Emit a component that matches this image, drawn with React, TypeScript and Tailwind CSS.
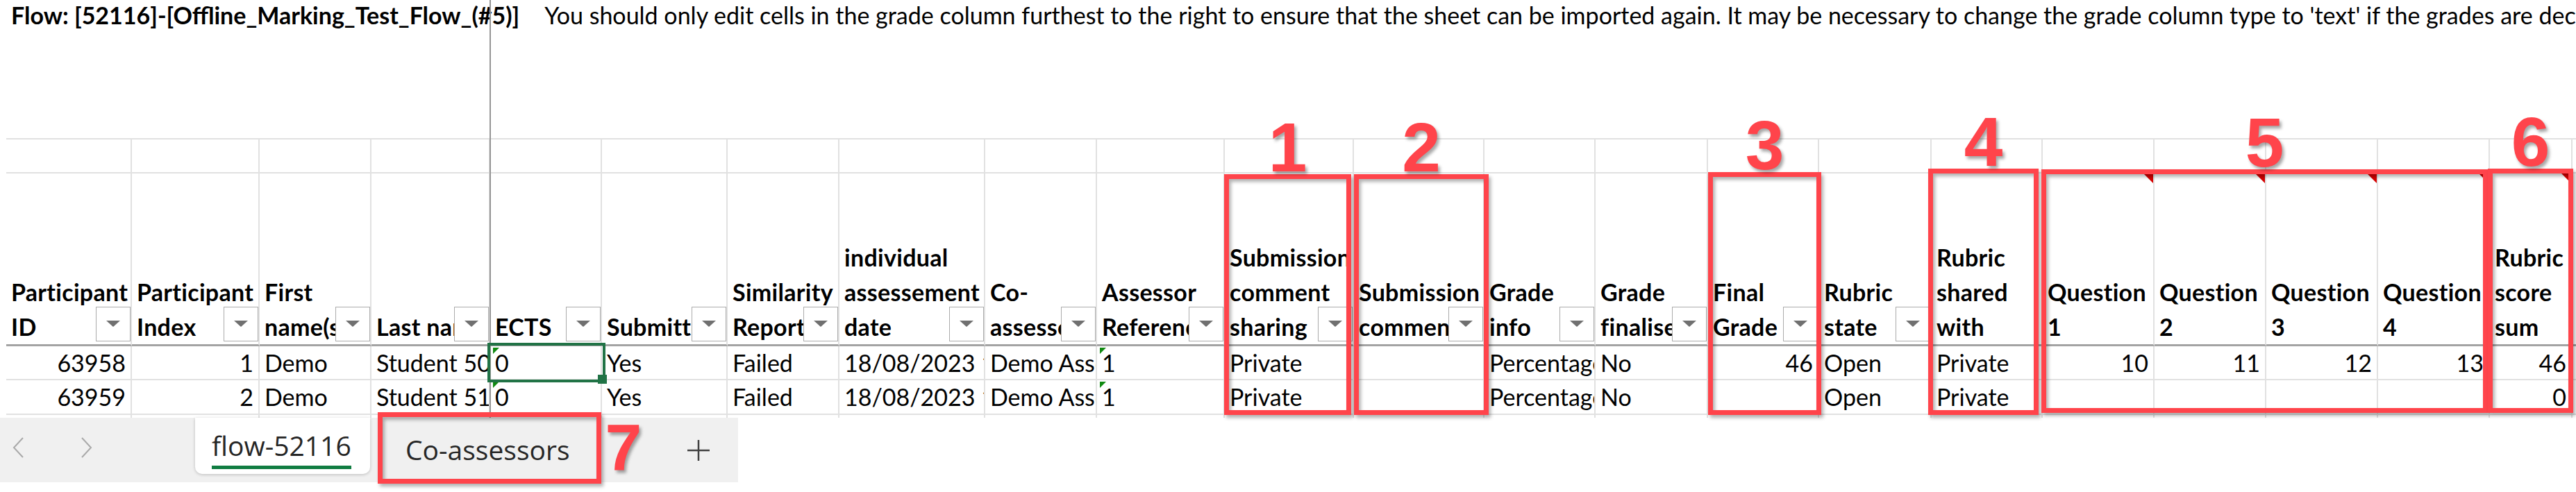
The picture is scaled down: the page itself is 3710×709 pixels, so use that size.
import clsx from "clsx";

type Head = { lines: string[]; filter?: boolean; note?: boolean };

const heads: Head[] = [
  { lines: ["Participant", "ID"], filter: true },
  { lines: ["Participant", "Index"], filter: true },
  { lines: ["First", "name(s)"], filter: true },
  { lines: ["Last name"], filter: true },
  { lines: ["ECTS"], filter: true },
  { lines: ["Submitted"], filter: true },
  { lines: ["Similarity", "Report"], filter: true },
  { lines: ["individual", "assessement", "date"], filter: true },
  { lines: ["Co-", "assessor(s)"], filter: true },
  { lines: ["Assessor", "Reference"], filter: true },
  { lines: ["Submission", "comment", "sharing"], filter: true },
  { lines: ["Submission", "comment"], filter: true },
  { lines: ["Grade", "info"], filter: true },
  { lines: ["Grade", "finalised"], filter: true },
  { lines: ["Final", "Grade"], filter: true },
  { lines: ["Rubric", "state"], filter: true },
  { lines: ["Rubric", "shared", "with"] },
  { lines: ["Question", "1"], note: true },
  { lines: ["Question", "2"], note: true },
  { lines: ["Question", "3"], note: true },
  { lines: ["Question", "4"], note: true },
  { lines: ["Rubric", "score", "sum"], note: true },
  { lines: [] },
];

const rows: string[][] = [
  ["63958", "1", "Demo", "Student 50", "0", "Yes", "Failed", "18/08/2023 10:24", "Demo Assessor", "1", "Private", "", "Percentage", "No", "46", "Open", "Private", "10", "11", "12", "13", "46", ""],
  ["63959", "2", "Demo", "Student 51", "0", "Yes", "Failed", "18/08/2023 10:24", "Demo Assessor", "1", "Private", "", "Percentage", "No", "", "Open", "Private", "", "", "", "", "0", ""],
];

const rightCols = [0, 1, 14, 17, 18, 19, 20, 21];
const textNumCols = [4, 9];

// red callouts drawn over the sheet (box + number above it)
const callouts = [
  { n: "1", box: "top-[251px] left-[1763px] h-[347px] w-[183px]" },
  { n: "2", box: "top-[251px] left-[1950px] h-[347px] w-[194px]" },
  { n: "3", box: "top-[248px] left-[2460px] h-[350px] w-[163px]" },
  { n: "4", box: "top-[243px] left-[2777px] h-[355px] w-[159px]" },
  { n: "5", box: "top-[244px] left-[2940px] h-[351px] w-[643px]" },
  { n: "6", box: "top-[243px] left-[3583px] h-[352px] w-[123px]" },
];

function FilterButton() {
  return (
    <div className="absolute right-0 bottom-[4px] flex h-[50px] w-[50px] items-center justify-center border border-[#ababab] bg-white">
      <svg width="20" height="10" viewBox="0 0 20 10">
        <polygon points="0,0 20,0 10,9" fill="#707070" />
      </svg>
    </div>
  );
}

function HeaderCell({ head }: { head: Head }) {
  return (
    <div className="relative flex flex-col justify-end overflow-hidden border-r-2 border-b-[3px] border-[#e1e1e1] border-b-[#a3a3a3] px-[7px] font-bold tracking-[0.3px]">
      {head.note && (
        <div className="absolute top-0 right-0 h-0 w-0 border-t-[14px] border-l-[14px] border-t-[#d60000] border-l-transparent" />
      )}
      {head.lines.map((l) => (
        <div key={l} className="whitespace-nowrap leading-[50px]">
          {l}
        </div>
      ))}
      {head.filter && <FilterButton />}
    </div>
  );
}

function DataCell({ value, col }: { value: string; col: number }) {
  return (
    <div
      className={clsx(
        "relative overflow-hidden whitespace-nowrap border-r-2 border-b-2 border-[#e1e1e1] px-[7px] leading-[47px]",
        rightCols.includes(col) && "text-right"
      )}
    >
      {textNumCols.includes(col) && (
        <div className="absolute top-[2px] left-[4px] h-0 w-0 border-t-[9px] border-r-[9px] border-t-[#118a11] border-r-transparent" />
      )}
      {value}
    </div>
  );
}

function Chevron({ dir }: { dir: "left" | "right" }) {
  return (
    <svg width="17" height="30" viewBox="0 0 17 30" fill="none">
      <polyline
        points={dir === "left" ? "15,1 2,15 15,29" : "2,1 15,15 2,29"}
        stroke="#a9a9a9"
        strokeWidth="2"
      />
    </svg>
  );
}

function Callout({ n, box, big }: { n: string; box: string; big?: boolean }) {
  return (
    <div className={clsx("absolute border-[7px] border-[#ff444b] shadow-[3px_4px_5px_rgba(0,0,0,0.3),inset_3px_4px_5px_rgba(0,0,0,0.3)]", box)}>
      <div
        className={clsx(
          "absolute text-center font-['Liberation_Sans',Arial,sans-serif] font-bold text-[#ff444b] [text-shadow:3px_4px_4px_rgba(0,0,0,0.35)]",
          big
            ? "top-[-3px] left-full ml-[-6px] w-[90px] text-[95px] leading-[95px]"
            : "bottom-full left-1/2 mb-[-4px] ml-[-50px] w-[100px] text-[100px] leading-[100px]"
        )}
      >
        {n}
      </div>
    </div>
  );
}

export default function App() {
  return (
    <div className="relative h-[709px] w-[3710px] overflow-hidden bg-white font-['Lato','Liberation_Sans',sans-serif] text-[34px] text-black">
      {/* title row */}
      <div className="flex h-[199px] items-start whitespace-nowrap pl-[16px] leading-[44px]">
        <span className="font-bold">Flow: [52116]-[Offline_Marking_Test_Flow_(#5)]</span>
        <span className="ml-[36px]">
          You should only edit cells in the grade column furthest to the right to ensure that the sheet can be imported again. It may be necessary to change the grade column type to 'text' if the grades are decimal numbers.
        </span>
      </div>

      {/* sheet grid */}
      <div className="ml-[9px] grid grid-cols-[181px_184px_161px_171px_161px_181px_161px_210px_161px_184px_186px_188px_160px_162px_160px_162px_160px_161px_161px_161px_161px_119px_200px] grid-rows-[49px_249px_49px_50px_4px] border-t-2 border-[#e1e1e1]">
        {heads.map((_, i) => (
          <div key={`e${i}`} className="border-r-2 border-b-2 border-[#e1e1e1]" />
        ))}
        {heads.map((h, i) => (
          <HeaderCell key={`h${i}`} head={h} />
        ))}
        {rows.map((r, ri) =>
          r.map((v, ci) => <DataCell key={`r${ri}c${ci}`} value={v} col={ci} />)
        )}
        {heads.map((_, i) => (
          <div key={`p${i}`} className="border-r-2 border-[#e1e1e1]" />
        ))}
      </div>

      {/* sheet tabs */}
      <div className="flex h-[93px] w-[1063px] items-start bg-[#f0f0f0] font-['Open_Sans','Noto_Sans',sans-serif] text-[39px] text-[#262626]">
        <div className="mt-[28px] ml-[18px] flex gap-[81px]">
          <Chevron dir="left" />
          <Chevron dir="right" />
        </div>
        <div className="ml-[148px] h-[81px] w-[252px] rounded-b-[10px] bg-white pt-[11px] pl-[24px] shadow-[0_1px_4px_rgba(0,0,0,0.22)]">
          <div className="inline-flex flex-col">
            <span className="leading-[53px]">flow-52116</span>
            <span className="mt-[3px] h-[5px] w-full bg-[#107c41]" />
          </div>
        </div>
        <div className="w-[456px] pt-[19px] pl-[51px] leading-[53px]">Co-assessors</div>
        <div className="mt-[30px]">
          <svg width="34" height="34" viewBox="0 0 34 34">
            <line x1="17" y1="2" x2="17" y2="32" stroke="#404040" strokeWidth="2.5" />
            <line x1="1" y1="17" x2="33" y2="17" stroke="#404040" strokeWidth="2.5" />
          </svg>
        </div>
      </div>

      {/* frozen pane divider */}
      <div className="absolute top-0 left-[705px] h-[602px] w-[2px] bg-[#959595]" />

      {/* active cell selection */}
      <div className="absolute top-[494px] left-[702px] h-[57px] w-[170px] border-[4px] border-[#217346]">
        <div className="absolute right-[-6px] bottom-[-6px] h-[13px] w-[13px] bg-[#217346]" />
      </div>

      {callouts.map((c) => (
        <Callout key={c.n} n={c.n} box={c.box} />
      ))}
      <Callout n="7" box="top-[594px] left-[544px] h-[103px] w-[322px]" big />
    </div>
  );
}
